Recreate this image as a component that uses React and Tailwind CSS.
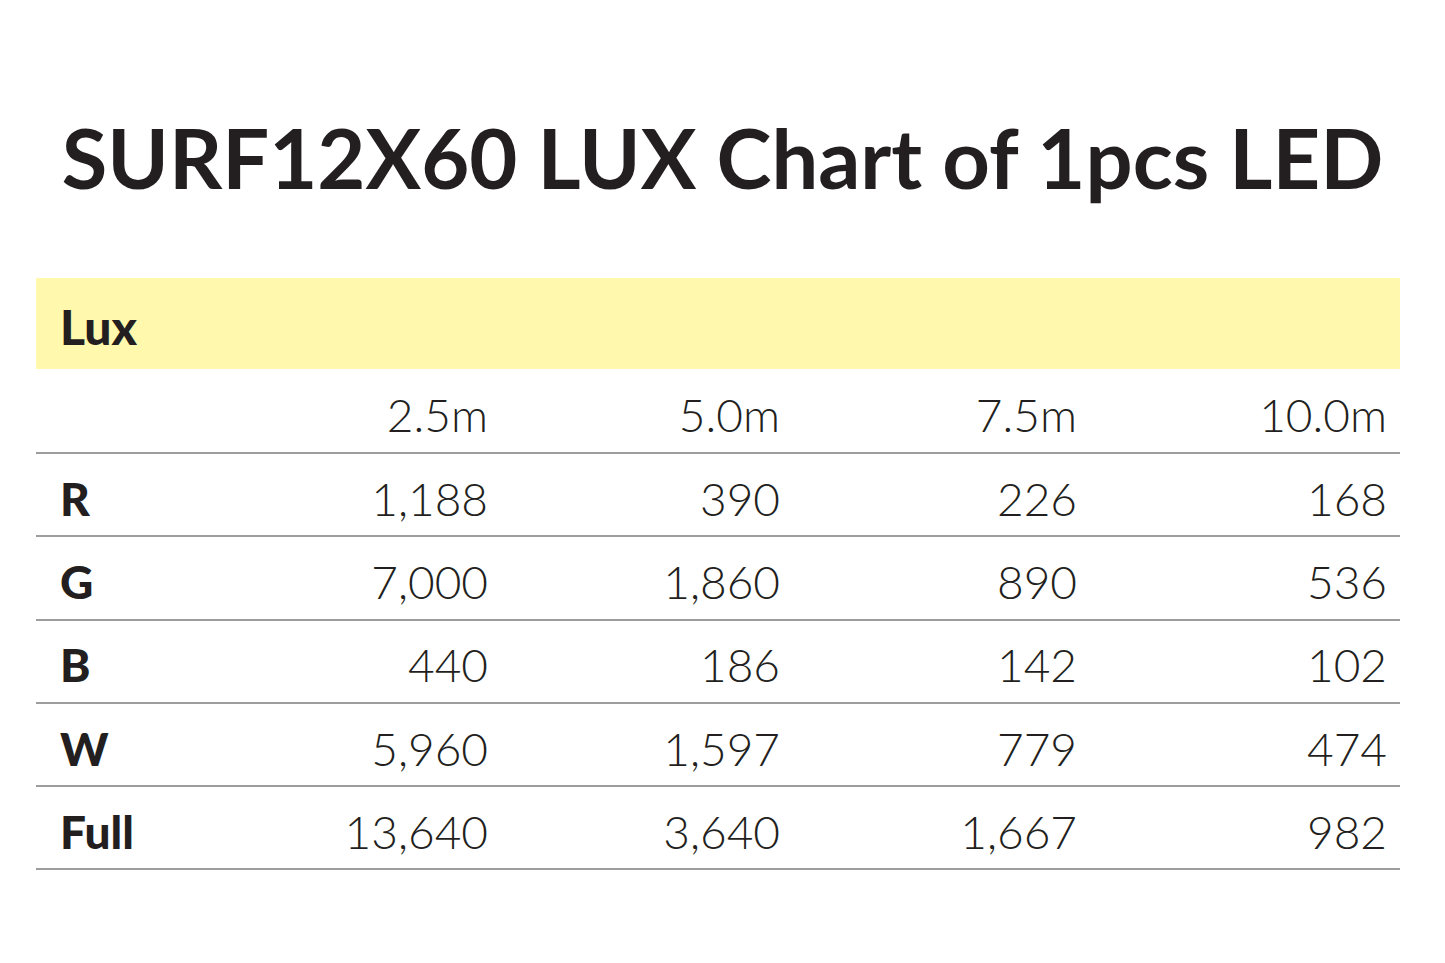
const rows = [
  ["R", "1,188", "390", "226", "168"],
  ["G", "7,000", "1,860", "890", "536"],
  ["B", "440", "186", "142", "102"],
  ["W", "5,960", "1,597", "779", "474"],
  ["Full", "13,640", "3,640", "1,667", "982"],
];

const cols = "grid grid-cols-[160px_292px_292px_297px_310px] pr-[13px]";

export default function App() {
  return (
    <div className="w-[1445px] h-[963px] bg-white text-[#231f20] font-['Lato','Open_Sans',sans-serif] overflow-hidden">
      <h1 className="pt-[111px] h-[278px] text-center text-[83px] leading-[92px] font-bold">
        SURF12X60 LUX Chart of 1pcs LED
      </h1>

      <div className="mx-[36px] w-[1364px]">
        <div className="h-[91px] bg-[#fff8ad] flex items-center pl-[24px] pt-[6px] text-[48px] font-black">
          Lux
        </div>

        <div className={`${cols} h-[85px] items-center pt-[7px] border-b-2 border-[#9d9d9d] text-[46px] font-light`}>
          <div />
          {["2.5m", "5.0m", "7.5m", "10.0m"].map((h) => (
            <div key={h} className="text-right">{h}</div>
          ))}
        </div>

        {rows.map((r) => (
          <div
            key={r[0]}
            className={`${cols} h-[83.3px] items-center pt-[7px] border-b-2 border-[#9d9d9d] text-[46px]`}
          >
            <div className="pl-[24px] font-black">{r[0]}</div>
            {r.slice(1).map((v, i) => (
              <div key={i} className="text-right font-light">{v}</div>
            ))}
          </div>
        ))}
      </div>
    </div>
  );
}
